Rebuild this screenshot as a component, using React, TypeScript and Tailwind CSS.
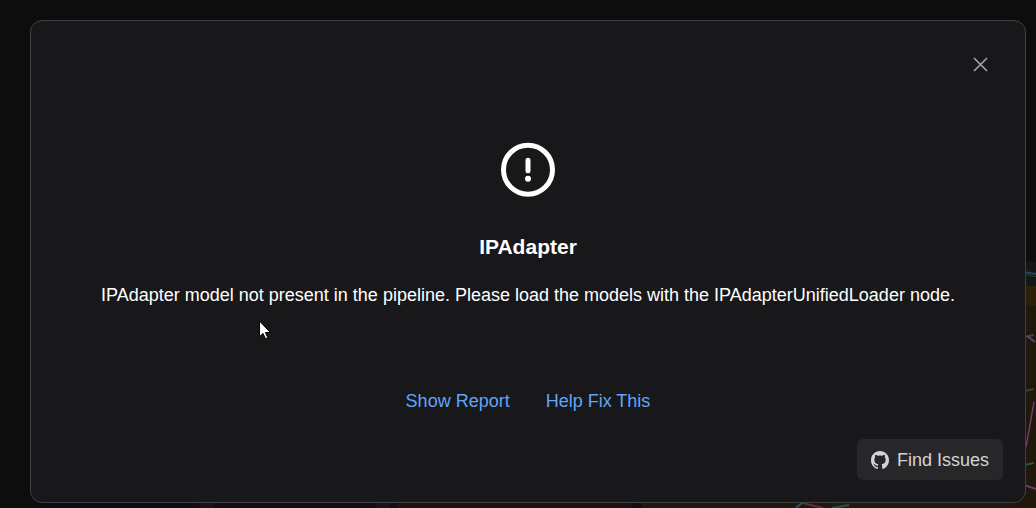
import { useState } from "react";

const GraphBackdrop = () => (
  <svg
    className="absolute right-0 bottom-0"
    width="1036"
    height="508"
    viewBox="0 0 1036 508"
    fill="none"
    aria-hidden="true"
  >
    <rect x="194" y="503" width="442" height="5" fill="#120d12" />
    <rect x="200" y="503" width="14" height="5" fill="#1c101c" />
    <rect x="375" y="503" width="15" height="5" fill="#1c101c" />
    <rect x="398" y="503" width="234" height="5" fill="#210f11" />
    <rect x="641" y="503" width="190" height="5" fill="#1c180d" />
    <rect x="831" y="503" width="205" height="5" fill="#231a0e" />
    <rect x="1010" y="262" width="26" height="24" fill="#151717" />
    <rect x="1010" y="286" width="26" height="222" fill="#1f180b" />
    <rect x="1010" y="286" width="26" height="20" fill="#2c200b" />
    <path d="M1020 271.500L1036 274" stroke="#1d4a63" strokeWidth="2" />
    <path d="M1020 274L1036 276.500" stroke="#28452f" strokeWidth="1" />
    <path d="M1024 337L1034 335" stroke="#31475e" strokeWidth="2" />
    <path d="M1027 336L1035 342" stroke="#6b3f68" strokeWidth="2" />
    <path d="M1024 391L1034 389" stroke="#3a4233" strokeWidth="2" />
    <path d="M1034 402L1026 447" stroke="#74396c" strokeWidth="1.500" />
    <path d="M1024 465L1034 463" stroke="#27583a" strokeWidth="2" />
    <path d="M1024 485L1036 489" stroke="#74396c" strokeWidth="2" />
    <path d="M796 508L802 503" stroke="#265472" strokeWidth="2" />
    <path d="M802 503L823 508" stroke="#6b2b2b" strokeWidth="2" />
    <path d="M832 508L849 505" stroke="#27583a" strokeWidth="2" />
  </svg>
);

const Pointer = () => (
  <svg
    className="absolute top-[320px] left-[258px]"
    width="14"
    height="22"
    viewBox="0 0 14 22"
    aria-hidden="true"
  >
    <path
      d="M1.500 1V16.700L5 13.400L7.500 18.800L9.800 17.800L7.400 12.500H12.300Z"
      fill="#fff"
      stroke="#000"
      strokeWidth="1"
    />
  </svg>
);

const App = () => {
  const [open, setOpen] = useState(true);

  return (
    <div className="relative min-h-screen overflow-hidden bg-[#0d0d0d] pt-5 pr-[10px] pb-[5px] pl-[30px] font-['Liberation_Sans',Arial,sans-serif] text-lg leading-6 text-white">
      <GraphBackdrop />
      {open && (
        <div
          role="dialog"
          aria-labelledby="error-title"
          className="relative rounded-xl border border-[#3f3f46] bg-[#18181b] px-[22px] pb-[22px]"
        >
          <div className="flex justify-end pt-[21px]">
            <button
              type="button"
              aria-label="Close"
              onClick={() => setOpen(false)}
              className="flex size-11 items-center justify-center rounded-full text-[#a1a1aa] hover:bg-[#27272a]"
            >
              <svg width="16" height="16" viewBox="0 0 16 16" fill="none">
                <path
                  d="M1.500 2.500L13.500 14.500M13.500 2.500L1.500 14.500"
                  stroke="currentColor"
                  strokeWidth="1.700"
                  strokeLinecap="round"
                />
              </svg>
            </button>
          </div>

          <div className="flex flex-col items-center pt-14 text-center">
            <svg width="56" height="56" viewBox="0 0 56 56" fill="none" aria-hidden="true">
              <circle cx="28" cy="27.700" r="24.500" stroke="#fff" strokeWidth="5" />
              <path d="M28 18.300V28.700" stroke="#fff" strokeWidth="5" strokeLinecap="round" />
              <circle cx="28" cy="36.800" r="3" fill="#fff" />
            </svg>
            <h3 id="error-title" className="mt-[37px] text-[21px] leading-6 font-bold">
              IPAdapter
            </h3>
            <p className="mt-6">
              IPAdapter model not present in the pipeline. Please load the
              models with the IPAdapterUnifiedLoader node.
            </p>
          </div>

          <div className="mt-[82px] flex justify-center gap-9 text-[#60a5fa]">
            <button type="button" className="hover:underline">
              Show Report
            </button>
            <button type="button" className="hover:underline">
              Help Fix This
            </button>
          </div>

          <div className="mt-[26px] flex justify-end">
            <button
              type="button"
              className="flex h-[41px] items-center gap-2 rounded-md bg-[#27272a] px-[14px] text-[#d4d4d8] hover:bg-[#3f3f46]"
            >
              <svg width="18" height="18" viewBox="0 0 18 18" fill="currentColor" aria-hidden="true">
                <path d="M9 0C4 0 0 4.100 0 9.200C0 13.300 2.600 16.700 6.200 17.900C6.600 18 6.800 17.700 6.800 17.500V15.800C4.300 16.300 3.700 14.700 3.700 14.700C3.300 13.600 2.700 13.300 2.700 13.300C1.900 12.700 2.800 12.700 2.800 12.700C3.700 12.800 4.200 13.700 4.200 13.700C5 15 6.300 14.700 6.800 14.400C6.900 13.800 7.100 13.400 7.400 13.200C5.400 12.900 3.300 12.100 3.300 8.600C3.300 7.600 3.600 6.800 4.200 6.200C4.100 5.900 3.800 5 4.300 3.700C4.300 3.700 5.100 3.500 6.800 4.700A8.500 8.500 0 0 1 11.200 4.700C12.900 3.500 13.700 3.700 13.700 3.700C14.200 5 13.900 5.900 13.800 6.200C14.400 6.800 14.700 7.600 14.700 8.600C14.700 12.100 12.600 12.900 10.600 13.200C10.900 13.500 11.200 14 11.200 14.900V17.500C11.200 17.700 11.400 18 11.800 17.900C15.400 16.700 18 13.300 18 9.200C18 4.100 14 0 9 0Z" />
              </svg>
              Find Issues
            </button>
          </div>
        </div>
      )}
      <Pointer />
    </div>
  );
};

export default App;
